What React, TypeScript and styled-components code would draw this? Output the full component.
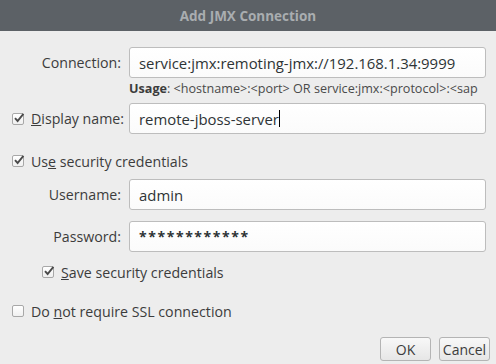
import React from "react";
import styled, { createGlobalStyle } from "styled-components";

const GlobalStyle = createGlobalStyle`
  html, body {
    margin: 0;
    padding: 0;
    background: #ededed;
  }
  body {
    font-family: "Open Sans", "DejaVu Sans", sans-serif;
    color: #3c3c3c;
  }
`;

const CheckIcon = () => (
  <svg width="12" height="12" viewBox="0 0 12 12">
    <path d="M2 6.2 L4.6 9 L10.4 1.8" fill="none" stroke="#4a4a4a" strokeWidth="1.9" />
  </svg>
);

const CheckBox: React.FC<{ checked?: boolean }> = ({ checked }) => (
  <Box>{checked && <CheckIcon />}</Box>
);

export default function App() {
  return (
    <>
      <GlobalStyle />
      <Dialog>
        <TitleBar>Add JMX Connection</TitleBar>
        <Body>
          <FormGrid>
            <Label>Connection:</Label>
            <Input>service:jmx:remoting-jmx://192.168.1.34:9999</Input>
            <span />
            <Usage>
              <b>Usage</b>: &lt;hostname&gt;:&lt;port&gt; OR service:jmx:&lt;protocol&gt;:&lt;sap
            </Usage>
            <CheckLabel>
              <CheckBox checked />
              <span>
                <u>D</u>isplay name:
              </span>
            </CheckLabel>
            <Input>
              remote-jboss-server
              <Caret />
            </Input>
          </FormGrid>

          <CheckRow $top={17}>
            <CheckBox checked />
            <span>
              Us<u>e</u> security credentials
            </span>
          </CheckRow>

          <FormGrid $top={8} $rowGap={11}>
            <Label>Username:</Label>
            <Input>admin</Input>
            <Label>Password:</Label>
            <Input $password>************</Input>
          </FormGrid>

          <CheckRow $top={10} $indent={30}>
            <CheckBox checked />
            <span>
              <u>S</u>ave security credentials
            </span>
          </CheckRow>

          <CheckRow $top={19}>
            <CheckBox />
            <span>
              Do <u>n</u>ot require SSL connection
            </span>
          </CheckRow>

          <Buttons>
            <Button>OK</Button>
            <Button>Cancel</Button>
          </Buttons>
        </Body>
      </Dialog>
    </>
  );
}

const Dialog = styled.div`
  width: 496px;
  height: 364px;
  overflow: hidden;
  display: flex;
  flex-direction: column;
`;

const TitleBar = styled.div`
  height: 31px;
  flex-shrink: 0;
  background: #5c6166;
  color: #a9adb0;
  font-weight: bold;
  font-size: 13.5px;
  display: flex;
  align-items: center;
  justify-content: center;
`;

const Body = styled.div`
  padding: 16px 6px 0 12px;
  display: flex;
  flex-direction: column;
`;

const FormGrid = styled.div<{ $top?: number; $rowGap?: number }>`
  display: grid;
  grid-template-columns: 117px 357px;
  row-gap: ${(p) => p.$rowGap ?? 0}px;
  margin-top: ${(p) => p.$top ?? 0}px;
  align-items: center;
`;

const Label = styled.div`
  text-align: right;
  padding-right: 8px;
  font-size: 14.2px;
`;

const Input = styled.div<{ $password?: boolean }>`
  height: 31px;
  box-sizing: border-box;
  border: 1px solid #bdbdbd;
  border-radius: 3px;
  background: linear-gradient(#ffffff, #fbfbfb);
  padding-left: 9px;
  display: flex;
  align-items: center;
  font-size: ${(p) => (p.$password ? "14px" : "14.9px")};
  color: #2e3436;
  letter-spacing: ${(p) => (p.$password ? "1.6px" : "0")};
  font-weight: ${(p) => (p.$password ? "bold" : "normal")};
  white-space: nowrap;
  overflow: hidden;
`;

const Caret = styled.span`
  display: inline-block;
  width: 1px;
  height: 17px;
  background: #000;
`;

const Usage = styled.div`
  font-size: 12.6px;
  color: #4a4a4a;
  white-space: nowrap;
  overflow: hidden;
  height: 17px;
  line-height: 17px;
  margin: 2px 0 6px;
  b {
    color: #3c3c3c;
  }
`;

const CheckLabel = styled.div`
  display: flex;
  align-items: center;
  gap: 7px;
  font-size: 14.2px;
`;

const CheckRow = styled.div<{ $top?: number; $indent?: number }>`
  display: flex;
  align-items: center;
  gap: 7px;
  font-size: 14.2px;
  height: 20px;
  margin-top: ${(p) => p.$top ?? 0}px;
  padding-left: ${(p) => p.$indent ?? 0}px;
`;

const Box = styled.span`
  position: relative;
  width: 12px;
  height: 12px;
  box-sizing: border-box;
  border: 1px solid #a8a8a8;
  border-radius: 2px;
  background: linear-gradient(#ffffff, #f0f0f0);
  flex-shrink: 0;
  svg {
    position: absolute;
    left: 0;
    top: -2px;
  }
`;

const Buttons = styled.div`
  display: flex;
  justify-content: flex-end;
  gap: 8px;
  margin-top: 16px;
`;

const Button = styled.div`
  width: 51px;
  height: 24px;
  box-sizing: border-box;
  border: 1px solid #b4b4b4;
  border-radius: 3px;
  background: linear-gradient(#f8f8f8, #e6e6e6);
  display: flex;
  align-items: center;
  justify-content: center;
  font-size: 14px;
  color: #3c3c3c;
`;
